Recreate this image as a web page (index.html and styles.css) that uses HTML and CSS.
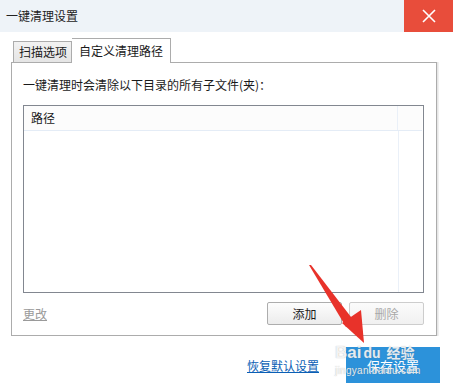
FILE: index.html
```html
<!DOCTYPE html>
<html lang="zh-CN">
<head>
  <meta charset="utf-8">
  <title>一键清理设置</title>
  <link rel="stylesheet" href="styles.css">
</head>
<body>
  <div class="window">
    <div class="titlebar">
      <span class="title">一键清理设置</span>
      <span class="close">
        <svg width="16" height="16" viewBox="0 0 16 16"><path d="M2 2 L14 14 M14 2 L2 14" stroke="#fff" stroke-width="1.6" fill="none"/></svg>
      </span>
    </div>
    <div class="tabs">
      <span class="tab">扫描选项</span>
      <span class="tab active">自定义清理路径</span>
    </div>
    <div class="panel">
      <p class="label">一键清理时会清除以下目录的所有子文件(夹)：</p>
      <div class="list">
        <div class="list-head">
          <span class="col">路径</span>
          <span class="col-rest"></span>
        </div>
        <div class="list-body">
          <span class="col"></span>
          <span class="col-rest"></span>
        </div>
      </div>
      <div class="actions">
        <a class="edit" href="#">更改</a>
        <button class="btn" type="button">添加</button>
        <button class="btn" type="button" disabled>删除</button>
      </div>
    </div>
    <div class="footer">
      <a class="reset" href="#">恢复默认设置</a>
      <button class="save" type="button">保存设置</button>
    </div>
  </div>
  <!-- annotation over the screenshot -->
  <svg class="arrow" width="70" height="90" viewBox="0 0 70 90">
    <polygon points="3,0 5,0 45,52 49,58 40,62" fill="#e8322a"/>
    <polygon points="36,58 55,45 58,78" fill="#e8322a"/>
  </svg>
  <div class="watermark">
    <div class="wm-top"><span>Bai</span><span class="paw">du</span><span class="wm-cn">经验</span></div>
    <div class="wm-url">jingyan.baidu.com</div>
  </div>
</body>
</html>
```
FILE: styles.css
```css
html, body { margin: 0; padding: 0; background: #fff; }
body { font-family: "Noto Sans CJK SC", "Liberation Sans", sans-serif; font-size: 12px; color: #1a1a1a; width: 453px; height: 388px; overflow: hidden; position: relative; }
.window { display: flex; flex-direction: column; height: 388px; }
.titlebar { display: flex; align-items: center; height: 32px; background: #eef3f8; }
.title { flex: 1; padding-left: 6px; font-size: 12px; line-height: 32px; color: #222; }
.close { width: 49px; height: 32px; background: #e84d3b; display: flex; align-items: center; justify-content: center; }
.tabs { display: flex; align-items: flex-end; margin: 6px 0 0 13px; height: 24px; position: relative; z-index: 1; }
.tab { height: 20px; line-height: 20px; padding: 0 4px 0 5px; border: 1px solid #acacac; border-bottom: none; background: linear-gradient(#f2f2f2, #e5e5e5); white-space: nowrap; }
.tab.active { height: 24px; line-height: 23px; padding: 0 7px 0 7px; background: #fff; border-left: none; margin-bottom: -1px; }
.panel { margin: 0 16px 0 11px; height: 272px; border: 1px solid #acacac; box-shadow: 1px 0 0 #e6e6e6, 2px 0 0 #f0f0f0; padding: 0 12px 0 11px; display: flex; flex-direction: column; }
.label { margin: 14px 0 0; line-height: 16px; height: 16px; white-space: nowrap; }
.list { margin-top: 12px; height: 186px; border: 1px solid #828790; display: flex; flex-direction: column; }
.list-head { display: flex; height: 24px; border-bottom: 1px solid #e4ecf6; background: #fcfcfc; margin-right: 1px; }
.list-head .col { line-height: 23px; padding-left: 7px; }
.col { flex: 1; border-right: 1px solid #eaf0f8; }
.col-rest { width: 24px; }
.list-body { flex: 1; display: flex; }
.actions { display: flex; align-items: center; margin-top: 9px; }
.edit { flex: 1; color: #9a9a9a; text-decoration: underline; font-size: 12px; }
.btn { width: 75px; height: 23px; margin-left: 7px; font: inherit; font-size: 12px; border: 1px solid #adadad; border-radius: 2px; background: linear-gradient(#fdfdfd, #ececec); color: #1a1a1a; padding: 0; }
.btn[disabled] { color: #a8a8a8; border-color: #cdcdcd; background: linear-gradient(#fbfbfb, #f1f1f1); }
.footer { display: flex; align-items: center; justify-content: flex-end; margin-top: 11px; padding-right: 13px; }
.reset { color: #0b5fb5; text-decoration: underline; margin-right: 27px; }
.save { width: 94px; height: 36px; border: none; background: #2c92da; color: #fff; font: inherit; font-size: 13px; padding: 0; }
.arrow { position: absolute; left: 306px; top: 265px; }
.watermark { position: absolute; left: 335px; top: 342px; width: 92px; color: rgba(255,255,255,0.85); font-family: "Liberation Sans", sans-serif; text-shadow: 0 0 1px rgba(120,120,120,0.6); pointer-events: none; }
.wm-top { display: flex; align-items: baseline; font-size: 17px; font-weight: bold; line-height: 20px; }
.paw { margin-left: 2px; font-size: 14px; }
.wm-cn { margin-left: 6px; font-family: "Noto Sans CJK SC", sans-serif; font-size: 14px; }
.wm-url { font-size: 10px; line-height: 12px; margin-top: 2px; letter-spacing: 0.3px; }
```
